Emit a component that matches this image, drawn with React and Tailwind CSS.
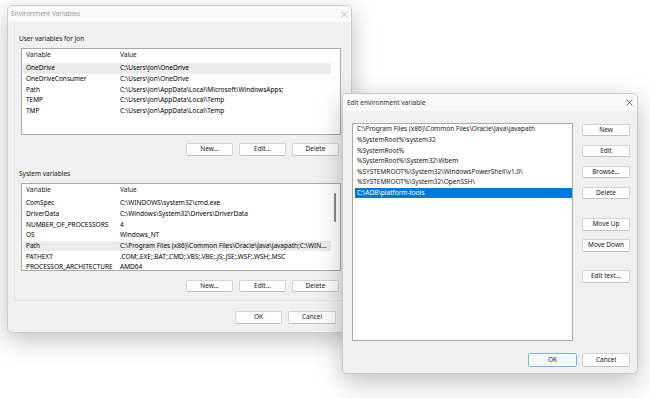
import React from "react";

function CloseX({ color = "#6b6b6b" }) {
  return (
    <svg width="7" height="7" viewBox="0 0 7 7">
      <path d="M0.5 0.5 L6.5 6.5 M6.5 0.5 L0.5 6.5" stroke={color} strokeWidth="0.8" fill="none" />
    </svg>
  );
}

function Btn({ children, w = "w-[47px]", h = "h-[13px]", def = false }) {
  return (
    <div
      className={`${w} ${h} shrink-0 flex items-center justify-center rounded-[2px] border ${
        def ? "border-[#7fb2dd] bg-[#f7fafd]" : "border-[#d4d4d4] border-b-[#c2c2c2] bg-[#fdfdfd]"
      } text-[#1a1a1a] leading-none`}
    >
      {children}
    </div>
  );
}

const userRows = [
  ["OneDrive", "C:\\Users\\Jon\\OneDrive"],
  ["OneDriveConsumer", "C:\\Users\\Jon\\OneDrive"],
  ["Path", "C:\\Users\\Jon\\AppData\\Local\\Microsoft\\WindowsApps;"],
  ["TEMP", "C:\\Users\\Jon\\AppData\\Local\\Temp"],
  ["TMP", "C:\\Users\\Jon\\AppData\\Local\\Temp"],
];

const sysRows = [
  ["ComSpec", "C:\\WINDOWS\\system32\\cmd.exe"],
  ["DriverData", "C:\\Windows\\System32\\Drivers\\DriverData"],
  ["NUMBER_OF_PROCESSORS", "4"],
  ["OS", "Windows_NT"],
  ["Path", "C:\\Program Files (x86)\\Common Files\\Oracle\\Java\\javapath;C:\\WIN..."],
  ["PATHEXT", ".COM;.EXE;.BAT;.CMD;.VBS;.VBE;.JS;.JSE;.WSF;.WSH;.MSC"],
  ["PROCESSOR_ARCHITECTURE", "AMD64"],
];

const pathItems = [
  "C:\\Program Files (x86)\\Common Files\\Oracle\\Java\\javapath",
  "%SystemRoot%\\system32",
  "%SystemRoot%",
  "%SystemRoot%\\System32\\Wbem",
  "%SYSTEMROOT%\\System32\\WindowsPowerShell\\v1.0\\",
  "%SYSTEMROOT%\\System32\\OpenSSH\\",
  "C:\\ADB\\platform-tools",
];

function VarTable({ rows, selected, h, scroll }) {
  return (
    <div className={`relative ml-[2px] w-[320px] ${h} border border-[#a9a9a9] bg-white overflow-hidden`}>
      <div className="flex h-[11px] items-center pl-[4px] pt-[1px] text-[#1a1a1a]">
        <div className="w-[94px]">Variable</div>
        <div>Value</div>
      </div>
      <div className="mt-[3px] flex flex-col">
        {rows.map(([k, v], i) => (
          <div
            key={k}
            className={`mx-[1px] w-[308px] h-[10.67px] flex items-center pl-[3px] whitespace-nowrap ${
              i === selected ? "bg-[#ececec]" : ""
            }`}
          >
            <div className="w-[94px] shrink-0">{k}</div>
            <div>{v}</div>
          </div>
        ))}
      </div>
      {scroll && (
        <div className="absolute left-[312px] top-[9px] w-[2px] h-[29px] rounded-full bg-[#8a8a8a]" />
      )}
    </div>
  );
}

export default function App() {
  return (
    <div className="relative w-[650px] h-[398px] bg-white overflow-hidden font-['Noto_Sans',sans-serif] text-[6.5px] text-black">
      {/* Main window */}
      <div className="absolute left-[7px] top-[5px] w-[345px] h-[328px] rounded-[5px] border border-[#cdcdcd] bg-[#f0f0f0] shadow-[0_7px_24px_rgba(0,0,0,0.25)] flex flex-col overflow-hidden">
        <div className="h-[16px] shrink-0 bg-[#fafafa] flex items-center justify-between pl-[3px] pr-[3px] text-[#9a9a9a]">
          <span>Environment Variables</span>
          <CloseX color="#a8a8a8" />
        </div>
        <div className="ml-[6px] border-l border-b border-[#e4e4e4] pl-[4px] pb-[8px] flex flex-col">
          <div className="mt-[12px] h-[9px] leading-[9px] text-[#1a1a1a]">User variables for Jon</div>
          <div className="mt-[5px]">
            <VarTable rows={userRows} selected={0} h="h-[87px]" />
          </div>
          <div className="mt-[8px] ml-[2px] w-[318px] flex justify-end gap-[6px]">
            <Btn>New...</Btn>
            <Btn>Edit...</Btn>
            <Btn>Delete</Btn>
          </div>
          <div className="mt-[13px] h-[9px] leading-[9px] text-[#1a1a1a]">System variables</div>
          <div className="mt-[5px]">
            <VarTable rows={sysRows} selected={4} h="h-[88px]" scroll />
          </div>
          <div className="mt-[9px] ml-[2px] w-[318px] flex justify-end gap-[6px]">
            <Btn h="h-[12px]">New...</Btn>
            <Btn h="h-[12px]">Edit...</Btn>
            <Btn h="h-[12px]">Delete</Btn>
          </div>
        </div>
        <div className="mt-[10px] pr-[15px] flex justify-end gap-[6px]">
          <Btn>OK</Btn>
          <Btn w="w-[48px]">Cancel</Btn>
        </div>
      </div>

      {/* Edit environment variable dialog */}
      <div className="absolute left-[342px] top-[93px] w-[296px] h-[281px] rounded-[5px] border border-[#c8c8c8] bg-[#f0f0f0] shadow-[0_8px_26px_rgba(0,0,0,0.25)] flex flex-col overflow-hidden">
        <div className="h-[17px] shrink-0 bg-[#f9f9f9] flex items-center justify-between pl-[4px] pr-[4px] text-[#333333]">
          <span>Edit environment variable</span>
          <CloseX color="#444444" />
        </div>
        <div className="flex mt-[12px] ml-[9px]">
          <div className="w-[221px] h-[218px] border border-[#a9a9a9] bg-white flex flex-col">
            {pathItems.map((p, i) => (
              <div
                key={p}
                className={`ml-[2px] h-[10.6px] flex items-center pl-[2px] whitespace-nowrap ${
                  i === 6 ? "bg-[#0078d7] text-white" : "text-[#1a1a1a]"
                }`}
              >
                {p}
              </div>
            ))}
          </div>
          <div className="ml-[9px] pt-[1px] flex flex-col">
            <Btn w="w-[48px]" h="h-[12px]">New</Btn>
            <div className="mt-[9px]"><Btn w="w-[48px]" h="h-[12px]">Edit</Btn></div>
            <div className="mt-[9px]"><Btn w="w-[48px]" h="h-[12px]">Browse...</Btn></div>
            <div className="mt-[9px]"><Btn w="w-[48px]" h="h-[12px]">Delete</Btn></div>
            <div className="mt-[19px]"><Btn w="w-[48px]" h="h-[13px]">Move Up</Btn></div>
            <div className="mt-[8px]"><Btn w="w-[48px]" h="h-[13px]">Move Down</Btn></div>
            <div className="mt-[18px]"><Btn w="w-[48px]" h="h-[13px]">Edit text...</Btn></div>
          </div>
        </div>
        <div className="mt-[12px] pr-[7px] flex justify-end gap-[5px]">
          <Btn w="w-[49px]" h="h-[14px]" def>OK</Btn>
          <Btn w="w-[48px]" h="h-[14px]">Cancel</Btn>
        </div>
      </div>
    </div>
  );
}
